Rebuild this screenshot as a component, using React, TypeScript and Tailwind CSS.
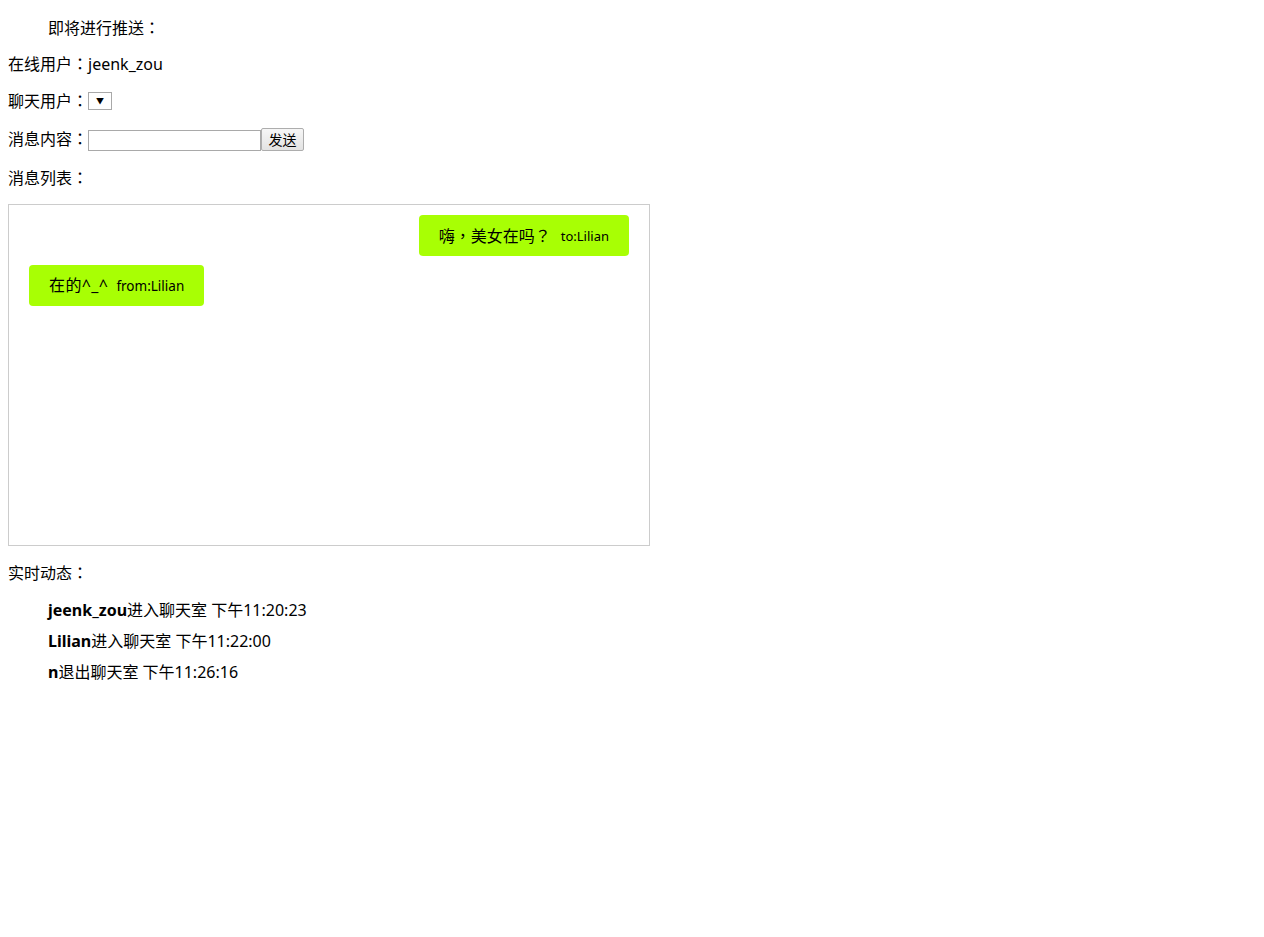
import React from "react";

const font = { fontFamily: '"Noto Sans", "Noto Sans CJK SC", sans-serif' };

function P({ c }: { c: string }) {
  return <span style={{ fontFamily: '"Noto Sans CJK TC", sans-serif' }}>{c}</span>;
}

export default function App() {
  return (
    <div className="min-h-[937px] w-[1264px] bg-white text-black text-[16px]" style={font}>
      <div className="px-2 pt-[17px]">
        <div className="h-[21px] leading-[21px] pl-10">即将进行推送<P c="：" /></div>
        <div className="mt-[15px] h-[21px] leading-[21px]">在线用户<P c="：" />jeenk_zou</div>
        <div className="mt-[16px] h-[21px] flex items-center">
          <span className="leading-[21px]">聊天用户<P c="：" /></span>
          <div className="w-[24px] h-[18px] border border-[#a9a9a9] bg-white flex items-center justify-center mt-[1px]">
            <span className="text-[8px] leading-none">▼</span>
          </div>
        </div>
        <div className="mt-[17px] h-[23px] flex items-center">
          <span className="leading-[21px] -mt-[2px]">消息内容<P c="：" /></span>
          <div className="w-[173px] h-[21px] border border-[#a9a9a9] bg-white self-end" />
          <button className="w-[43px] h-[23px] border border-[#adadad] rounded-[2px] bg-gradient-to-b from-[#f6f6f6] to-[#e3e3e3] text-[14px] leading-none text-black">
            发送
          </button>
        </div>
        <div className="mt-[16px] h-[21px] leading-[21px]">消息列表<P c="：" /></div>
        <div className="mt-[16px] w-[642px] h-[342px] border border-[#cccccc] px-5 pt-[10px] flex flex-col gap-[9px]">
          <div className="flex justify-end">
            <div className="bg-[#a8ff04] rounded-[4px] px-5 h-[41px] flex items-center whitespace-nowrap">
              <span className="leading-[21px]">嗨<P c="，" />美女在吗<P c="？" /></span>
              <span className="ml-[10px] text-[13px] leading-[21px] mt-[2px]">to:Lilian</span>
            </div>
          </div>
          <div className="flex justify-start">
            <div className="bg-[#a8ff04] rounded-[4px] px-5 h-[41px] flex items-center whitespace-nowrap">
              <span className="leading-[21px] tracking-[0.4px]">在的^_^</span>
              <span className="ml-[8px] text-[13.5px] leading-[21px] mt-[2px]">from:Lilian</span>
            </div>
          </div>
        </div>
        <div className="mt-[16px] h-[21px] leading-[21px]">实时动态<P c="：" /></div>
        <ul className="mt-[12px] pl-10">
          <li className="h-[31px] leading-[31px]">
            <b>jeenk_zou</b>进入聊天室 下午11:20:23
          </li>
          <li className="h-[31px] leading-[31px]">
            <b>Lilian</b>进入聊天室 下午11:22:00
          </li>
          <li className="h-[31px] leading-[31px]">
            <b>n</b>退出聊天室 下午11:26:16
          </li>
        </ul>
      </div>
    </div>
  );
}
